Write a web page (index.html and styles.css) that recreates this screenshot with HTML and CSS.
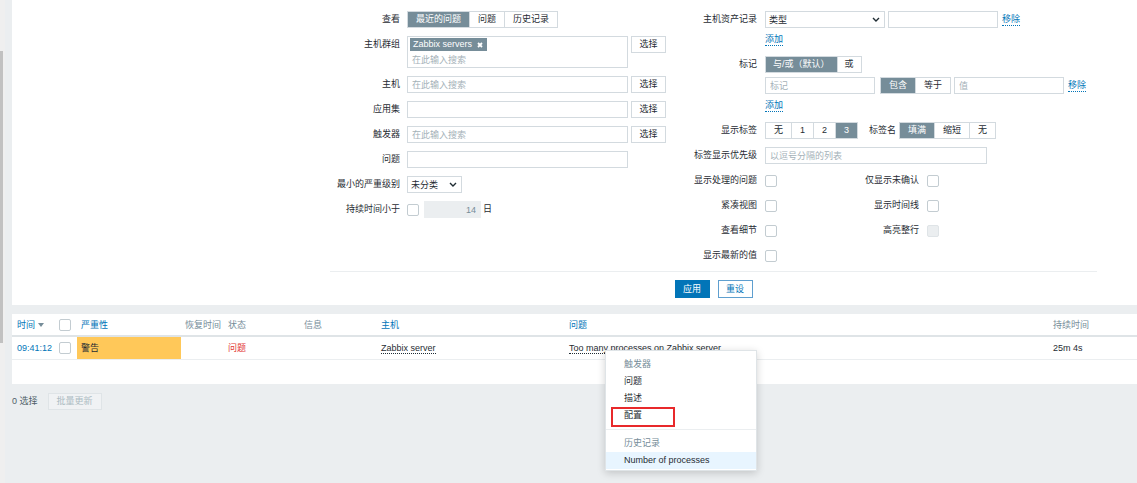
FILE: index.html
```html
<!DOCTYPE html>
<html lang="zh-CN">
<head>
<meta charset="utf-8">
<title>问题</title>
<link rel="stylesheet" href="styles.css">
</head>
<body>
<div class="page">
  <div class="rail"><div class="thumb"></div></div>
  <main class="main">
    <section class="filter-panel">
      <div class="filter">
        <div class="filter-cols">
          <div class="fcol fcol-left">
            <div class="frow">
              <span class="flabel">查看</span>
              <div class="seg"><span class="seg-item on">最近的问题</span><span class="seg-item">问题</span><span class="seg-item">历史记录</span></div>
            </div>
            <div class="frow">
              <span class="flabel">主机群组</span>
              <div class="ctrls">
                <div class="ms">
                  <span class="tag">Zabbix servers<svg class="tag-x" viewBox="0 0 6 6"><path d="M1 1l4 4M5 1l-4 4"/></svg></span>
                  <span class="ms-ph">在此输入搜索</span>
                </div>
                <button class="btn-sel">选择</button>
              </div>
            </div>
            <div class="frow">
              <span class="flabel">主机</span>
              <div class="ctrls"><input class="input w221" type="text" placeholder="在此输入搜索"><button class="btn-sel">选择</button></div>
            </div>
            <div class="frow">
              <span class="flabel">应用集</span>
              <div class="ctrls"><input class="input w221" type="text"><button class="btn-sel">选择</button></div>
            </div>
            <div class="frow">
              <span class="flabel">触发器</span>
              <div class="ctrls"><input class="input w221" type="text" placeholder="在此输入搜索"><button class="btn-sel">选择</button></div>
            </div>
            <div class="frow">
              <span class="flabel">问题</span>
              <div class="ctrls"><input class="input w221" type="text"></div>
            </div>
            <div class="frow">
              <span class="flabel">最小的严重级别</span>
              <div class="ctrls"><span class="select w55"><span>未分类</span><svg class="chev" viewBox="0 0 8 5"><path d="M1 1l3 3 3-3"/></svg></span></div>
            </div>
            <div class="frow">
              <span class="flabel">持续时间小于</span>
              <div class="ctrls ctrls-age"><input class="cb" type="checkbox"><input class="input num" type="text" value="14" disabled><span class="unit">日</span></div>
            </div>
          </div>

          <div class="fcol fcol-right">
            <div class="frow">
              <span class="flabel">主机资产记录</span>
              <div class="ctrls">
                <span class="select w120"><span>类型</span><svg class="chev" viewBox="0 0 8 5"><path d="M1 1l3 3 3-3"/></svg></span>
                <input class="input w110" type="text">
                <a class="link ml1">移除</a>
              </div>
            </div>
            <div class="frow r-add"><span class="flabel"></span><a class="link">添加</a></div>
            <div class="frow r-tag">
              <span class="flabel">标记</span>
              <div class="seg"><span class="seg-item on">与/或（默认）</span><span class="seg-item">或</span></div>
            </div>
            <div class="frow r-tagrow">
              <span class="flabel"></span>
              <div class="ctrls">
                <input class="input w110" type="text" placeholder="标记">
                <div class="seg ml2"><span class="seg-item on">包含</span><span class="seg-item">等于</span></div>
                <input class="input w110" type="text" placeholder="值">
                <a class="link ml1">移除</a>
              </div>
            </div>
            <div class="frow r-add"><span class="flabel"></span><a class="link">添加</a></div>
            <div class="frow r-show">
              <span class="flabel">显示标签</span>
              <div class="ctrls">
                <div class="seg"><span class="seg-item">无</span><span class="seg-item">1</span><span class="seg-item">2</span><span class="seg-item on">3</span></div>
                <span class="inl-label">标签名</span>
                <div class="seg"><span class="seg-item on">填满</span><span class="seg-item">缩短</span><span class="seg-item">无</span></div>
              </div>
            </div>
            <div class="frow r-prio">
              <span class="flabel">标签显示优先级</span>
              <input class="input w222" type="text" placeholder="以逗号分隔的列表">
            </div>
            <div class="frow r-cb">
              <span class="flabel">显示处理的问题</span><input class="cb" type="checkbox">
              <span class="flabel2">仅显示未确认</span><input class="cb" type="checkbox">
            </div>
            <div class="frow r-cb">
              <span class="flabel">紧凑视图</span><input class="cb" type="checkbox">
              <span class="flabel2">显示时间线</span><input class="cb" type="checkbox">
            </div>
            <div class="frow r-cb">
              <span class="flabel">查看细节</span><input class="cb" type="checkbox">
              <span class="flabel2">高亮整行</span><input class="cb" type="checkbox" disabled>
            </div>
            <div class="frow r-cb">
              <span class="flabel">显示最新的值</span><input class="cb" type="checkbox">
            </div>
          </div>
        </div>
        <div class="filter-actions">
          <button class="btn-apply">应用</button>
          <button class="btn-reset">重设</button>
        </div>
      </div>
    </section>

    <section class="table-panel">
      <table class="list">
        <thead>
          <tr>
            <th class="c-time"><a class="sort">时间</a><svg class="sort-arrow" viewBox="0 0 6 4"><path d="M0 0h6L3 4z"/></svg></th>
            <th class="c-cb"><input class="cb" type="checkbox"></th>
            <th class="c-sev"><a class="sort">严重性</a></th>
            <th class="c-rec">恢复时间</th>
            <th class="c-st">状态</th>
            <th class="c-info">信息</th>
            <th class="c-host"><a class="sort">主机</a></th>
            <th class="c-prob"><a class="sort">问题</a></th>
            <th class="c-dur">持续时间</th>
          </tr>
        </thead>
        <tbody>
          <tr>
            <td class="c-time"><a class="time-link">09:41:12</a></td>
            <td class="c-cb"><input class="cb" type="checkbox"></td>
            <td class="c-sev sev-warning">警告</td>
            <td class="c-rec"></td>
            <td class="c-st status-problem">问题</td>
            <td class="c-info"></td>
            <td class="c-host"><a class="action">Zabbix server</a></td>
            <td class="c-prob"><a class="action">Too many processes on Zabbix server</a></td>
            <td class="c-dur">25m 4s</td>
          </tr>
        </tbody>
      </table>
    </section>

    <div class="footer">
      <span class="selected">0 选择</span>
      <button class="btn-dis" disabled>批量更新</button>
    </div>
  </main>
</div>

<div class="menu">
  <div class="menu-head">触发器</div>
  <a class="menu-item">问题</a>
  <a class="menu-item">描述</a>
  <a class="menu-item">配置</a>
  <div class="menu-sep"></div>
  <div class="menu-head">历史记录</div>
  <a class="menu-item hover">Number of processes</a>
  <div class="mark"></div>
</div>
</body>
</html>
```

FILE: styles.css
```css
* { box-sizing: border-box; }
html, body { margin: 0; padding: 0; }
body {
  width: 1137px;
  height: 483px;
  overflow: hidden;
  position: relative;
  background: #ebeef0;
  color: #1f2c33;
  font-family: "Liberation Sans", Arial, "Noto Sans CJK SC", sans-serif;
  font-size: 9px;
  line-height: 12px;
}
input, button { font: inherit; color: inherit; margin: 0; }
a { color: inherit; text-decoration: none; }

.page { display: flex; min-height: 483px; }
.rail { flex: none; width: 5px; background: #efefef; }
.thumb { width: 3px; height: 292px; margin-top: 51px; background: #c1c1c1; }
.main { flex: 1; min-width: 0; padding-left: 7px; }

/* filter */
.filter-panel { background: #fff; padding: 11px 0 7px 318px; }
.filter { width: 767px; }
.filter-cols { display: flex; align-items: flex-start; }
.fcol { display: flex; flex-direction: column; }
.fcol-left { width: 360px; gap: 8px; }
.fcol-right { width: 407px; }
.frow { display: flex; align-items: flex-start; gap: 7px; }
.fcol-right .frow { gap: 8px; }
.flabel { flex: none; text-align: right; line-height: 17px; white-space: nowrap; }
.fcol-left .flabel { width: 70px; }
.fcol-right .flabel { width: 67px; }
.ctrls { display: flex; align-items: flex-start; gap: 3px; }
.ml1 { margin-left: 1px; }
.ml2 { margin-left: 2px; }

.input {
  height: 17px;
  border: 1px solid #d3dadf;
  background: #fff;
  padding: 0 4px;
  outline: none;
  line-height: 15px;
}
.input::placeholder { color: #a4b1b8; }
.w221 { width: 221px; }
.w110 { width: 110px; }
.w222 { width: 222px; }
.num { width: 57px; text-align: right; background: #ebeef0; border-color: #ebeef0; color: #768d99; margin-left: 2px; }
.unit { line-height: 17px; margin-left: -1px; }

.btn-sel {
  width: 35px;
  height: 17px;
  padding: 0;
  border: 1px solid #d3dadf;
  background: #fff;
  line-height: 15px;
}

.ms {
  width: 221px;
  height: 32px;
  border: 1px solid #d3dadf;
  padding: 1px 2px;
}
.tag {
  display: inline-flex;
  align-items: center;
  gap: 5px;
  height: 13px;
  padding: 0 4px 0 3px;
  background: #768d99;
  color: #fff;
  line-height: 13px;
  margin-bottom: 2px;
}
.tag-x { width: 6px; height: 6px; fill: none; stroke: #fff; stroke-width: 1.8; }
.ms-ph { display: block; line-height: 14px; padding-left: 2px; color: #a4b1b8; }

.select {
  display: flex;
  align-items: center;
  justify-content: space-between;
  height: 17px;
  border: 1px solid #d3dadf;
  padding: 0 4px 0 3px;
  background: #fff;
}
.w55 { width: 55px; }
.w120 { width: 120px; }
.chev { width: 8px; height: 5px; fill: none; stroke: #1f2c33; stroke-width: 1.4; }

.seg { display: inline-flex; height: 17px; border: 1px solid #d3dadf; background: #fff; flex: none; }
.seg-item { padding: 0 8px; line-height: 15px; border-left: 1px solid #d3dadf; white-space: nowrap; }
.seg-item:first-child { border-left: 0; }
.seg-item.on { background: #768d99; color: #fff; }

.link { color: #0275b8; border-bottom: 1px dotted #0275b8; line-height: 12px; margin-top: 2px; }
.r-add { margin-top: 3px; height: 16px; }
.r-add .link { margin-top: 2px; }
.r-tag { margin-top: 9px; }
.r-tag .seg-item { padding: 0 7px; }
.r-tagrow { margin-top: 4px; }
.r-show { margin-top: 9px; }
.inl-label { line-height: 17px; margin: 0 0 0 8px; }
.r-prio { margin-top: 8px; }
.r-cb { margin-top: 8px; height: 17px; align-items: center; }
.flabel2 { flex: none; width: 142px; text-align: right; white-space: nowrap; line-height: 17px; margin-left: -8px; }

.cb {
  appearance: none;
  -webkit-appearance: none;
  flex: none;
  width: 12px;
  height: 12px;
  border: 1px solid #c3ccd1;
  border-radius: 2px;
  background: #fff;
  margin: 0;
}
.cb:disabled { background: #ebeef0; border-color: #dfe4e7; }
.ctrls-age { align-items: center; gap: 3px; }

.filter-actions {
  margin-top: 7px;
  border-top: 1px solid #ebeef0;
  padding-top: 8px;
  display: flex;
  justify-content: center;
  gap: 8px;
}
.btn-apply, .btn-reset {
  width: 35px;
  height: 18px;
  padding: 0;
  line-height: 16px;
  border: 1px solid #0275b8;
}
.btn-apply { background: #0275b8; color: #fff; }
.btn-reset { background: #fff; color: #0275b8; border-color: #5f9fcf; }

/* table */
.table-panel { margin-top: 9px; background: #fff; padding-bottom: 24px; }
.list { width: 100%; border-collapse: collapse; table-layout: fixed; }
.list th, .list td { padding: 0 4px; text-align: left; white-space: nowrap; overflow: visible; font-weight: normal; }
.list th { height: 22px; border-bottom: 2px solid #dfe4e7; color: #768d99; vertical-align: middle; }
.list td { height: 23px; border-bottom: 1px solid #ebeef0; vertical-align: middle; }
.list .c-time { width: 43px; padding-left: 5px; }
.list .c-cb { width: 22px; }
.list .c-sev { width: 104px; }
.list .c-rec { width: 43px; }
.list .c-st { width: 76px; }
.list .c-info { width: 77px; }
.list .c-host { width: 188px; }
.list .c-prob { width: 484px; }
.list .c-dur { width: 88px; }
.list .cb { display: block; }
.sort { color: #0275b8; }
.sort-arrow { width: 6px; height: 4px; fill: #768d99; margin-left: 3px; vertical-align: 1px; }
.time-link { color: #0275b8; }
.sev-warning { background: #ffc859; }
.status-problem { color: #e33734; }
.action { border-bottom: 1px dotted #1f2c33; }

.footer { display: flex; align-items: center; gap: 10px; padding-top: 9px; }
.selected { color: #4f5f68; }
.btn-dis {
  height: 17px;
  padding: 0 8px;
  border: 1px solid #dfe4e7;
  background: #f0f2f4;
  color: #acbbc2;
  line-height: 15px;
}

/* context menu */
.menu {
  position: absolute;
  left: 605px;
  top: 350px;
  width: 152px;
  background: #fff;
  border: 1px solid #dfe4e7;
  box-shadow: 0 2px 8px rgba(0, 0, 0, 0.18);
  padding: 5px 0 1px;
}
.menu-head, .menu-item { display: block; height: 17px; line-height: 17px; padding-left: 18px; white-space: nowrap; }
.menu-head { color: #768d99; }
.menu-item { color: #1f2c33; }
.menu-item.hover { background: #e8f5ff; }
.menu-sep { height: 1px; background: #ebeef0; margin: 5px 0 5px; }
.mark {
  position: absolute;
  left: 5px;
  top: 56px;
  width: 64px;
  height: 20px;
  border: 2px solid #e8292b;
}
```
